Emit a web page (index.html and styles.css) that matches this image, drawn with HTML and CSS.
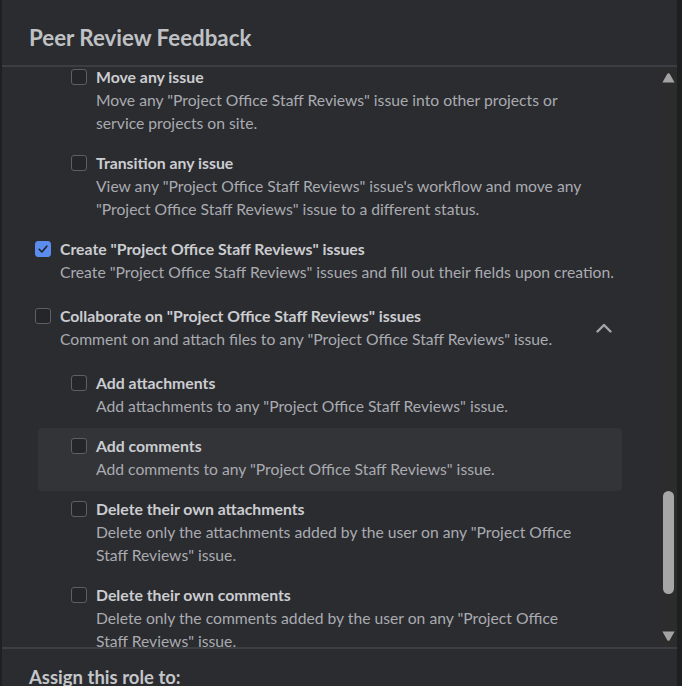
FILE: index.html
```html
<!DOCTYPE html>
<html lang="en">
<head>
<meta charset="utf-8">
<title>Peer Review Feedback</title>
<link rel="stylesheet" href="styles.css">
</head>
<body>
<div class="dialog">
  <header class="dialog-header">
    <h1 class="dialog-title">Peer Review Feedback</h1>
  </header>
  <div class="dialog-body">
    <div class="list">
      <div class="list-inner">
        <div class="sub-list">
          <div class="row sub">
            <span class="checkbox"></span>
            <div class="text">
              <div class="row-title">Move any issue</div>
              <div class="row-desc">Move any "Project Office Staff Reviews" issue into other projects or service projects on site.</div>
            </div>
          </div>
          <div class="row sub">
            <span class="checkbox"></span>
            <div class="text">
              <div class="row-title">Transition any issue</div>
              <div class="row-desc">View any "Project Office Staff Reviews" issue's workflow and move any "Project Office Staff Reviews" issue to a different status.</div>
            </div>
          </div>
        </div>

        <div class="row top">
          <span class="checkbox checked">
            <svg viewBox="0 0 16 16" width="16" height="16"><path d="M4.2 8.3 L6.9 11 L11.8 5.2" fill="none" stroke="#1d1f24" stroke-width="1.6" stroke-linecap="round" stroke-linejoin="round"/></svg>
          </span>
          <div class="text">
            <div class="row-title">Create "Project Office Staff Reviews" issues</div>
            <div class="row-desc">Create "Project Office Staff Reviews" issues and fill out their fields upon creation.</div>
          </div>
        </div>

        <div class="row top">
          <span class="checkbox"></span>
          <div class="text">
            <div class="row-title">Collaborate on "Project Office Staff Reviews" issues</div>
            <div class="row-desc">Comment on and attach files to any "Project Office Staff Reviews" issue.</div>
          </div>
          <span class="chevron">
            <svg viewBox="0 0 18 12" width="18" height="12"><path d="M2.5 9.5 L9 3 L15.5 9.5" fill="none" stroke="#a3a6ab" stroke-width="2.4" stroke-linecap="round" stroke-linejoin="round"/></svg>
          </span>
        </div>

        <div class="sub-list">
          <div class="row sub">
            <span class="checkbox"></span>
            <div class="text">
              <div class="row-title">Add attachments</div>
              <div class="row-desc">Add attachments to any "Project Office Staff Reviews" issue.</div>
            </div>
          </div>
          <div class="row sub hovered">
            <span class="checkbox"></span>
            <div class="text">
              <div class="row-title">Add comments</div>
              <div class="row-desc">Add comments to any "Project Office Staff Reviews" issue.</div>
            </div>
          </div>
          <div class="row sub">
            <span class="checkbox"></span>
            <div class="text">
              <div class="row-title">Delete their own attachments</div>
              <div class="row-desc">Delete only the attachments added by the user on any "Project Office Staff Reviews" issue.</div>
            </div>
          </div>
          <div class="row sub">
            <span class="checkbox"></span>
            <div class="text">
              <div class="row-title">Delete their own comments</div>
              <div class="row-desc">Delete only the comments added by the user on any "Project Office Staff Reviews" issue.</div>
            </div>
          </div>
        </div>
      </div>
    </div>
    <div class="scrollbar">
      <div class="scroll-btn">
        <svg viewBox="0 0 13 10" width="13" height="10"><path d="M5.3 0.8 Q6.5 -0.4 7.7 0.8 L12.6 9.6 L0.4 9.6 Z" fill="#a3a3a3"/></svg>
      </div>
      <div class="scroll-track">
        <div class="scroll-thumb"></div>
      </div>
      <div class="scroll-btn">
        <svg viewBox="0 0 13 10" width="13" height="10"><path d="M5.3 9.2 Q6.5 10.4 7.7 9.2 L12.6 0.4 L0.4 0.4 Z" fill="#a3a3a3"/></svg>
      </div>
    </div>
  </div>
  <footer class="dialog-footer">
    <div class="footer-title">Assign this role to:</div>
  </footer>
</div>
</body>
</html>
```

FILE: styles.css
```css
* { box-sizing: border-box; }
html, body {
  margin: 0;
  padding: 0;
  background: #2b2c30;
}
body {
  font-family: Lato, "Open Sans", "Noto Sans", sans-serif;
  color: #a9abb0;
  width: 682px;
  height: 686px;
  overflow: hidden;
}
.dialog {
  width: 682px;
  height: 686px;
  display: flex;
  flex-direction: column;
  border-left: 2px solid #1f2023;
  border-right: 5px solid #1e1f21;
  background: #2b2c30;
}
.dialog-header {
  flex: 0 0 auto;
  height: 67px;
  padding: 24px 0 0 27px;
  border-bottom: 2px solid #3c3e43;
}
.dialog-title {
  margin: 0;
  font-size: 22.3px;
  line-height: 28px;
  font-weight: 700;
  color: #bfc1c4;
}
.dialog-body {
  flex: 0 0 580px;
  display: flex;
  min-height: 0;
}
.list {
  flex: 1 1 auto;
  overflow: hidden;
  min-width: 0;
}
.list-inner {
  margin-top: -8px;
  width: 620px;
}
.sub-list {
  margin-left: 36px;
}
.row {
  display: flex;
  align-items: flex-start;
  padding-left: 33px;
}
.row.sub {
  padding-top: 6px;
  padding-bottom: 10px;
  border-radius: 4px;
  padding-right: 34px;
}
.row.top {
  padding-top: 6px;
  padding-bottom: 14px;
}
.row.hovered {
  background: #333438;
}
.checkbox {
  flex: 0 0 16px;
  width: 16px;
  height: 16px;
  margin-top: 4px;
  margin-right: 9px;
  border: 1.5px solid #5d5f64;
  border-radius: 3px;
  background: #25262a;
}
.checkbox.checked {
  background: #5b8def;
  border-color: #5b8def;
  display: flex;
  align-items: center;
  justify-content: center;
}
.checkbox.checked svg {
  margin: -1.5px;
}
.text {
  flex: 1 1 auto;
  min-width: 0;
}
.row-title {
  font-size: 15.8px;
  line-height: 24px;
  font-weight: 700;
  color: #cbcdd0;
}
.row-desc {
  font-size: 15.7px;
  line-height: 23px;
  color: #a9abb0;
}
.chevron {
  flex: 0 0 auto;
  margin-top: 18px;
  margin-right: 9px;
  display: flex;
}
.scrollbar {
  flex: 0 0 18px;
  display: flex;
  flex-direction: column;
  background: #2d2c2c;
}
.scroll-btn {
  height: 22px;
  display: flex;
  align-items: center;
  justify-content: center;
}
.scroll-track {
  flex: 1 1 auto;
  display: flex;
  flex-direction: column;
  align-items: center;
}
.scroll-thumb {
  margin-top: 402px;
  width: 11px;
  height: 103px;
  border-radius: 6px;
  background: #a6a6a6;
}
.dialog-footer {
  flex: 1 1 auto;
  border-top: 2px solid #3c3e43;
  padding: 16px 0 0 27px;
}
.footer-title {
  font-size: 18.5px;
  line-height: 24px;
  font-weight: 700;
  color: #c4c6c9;
}
```
